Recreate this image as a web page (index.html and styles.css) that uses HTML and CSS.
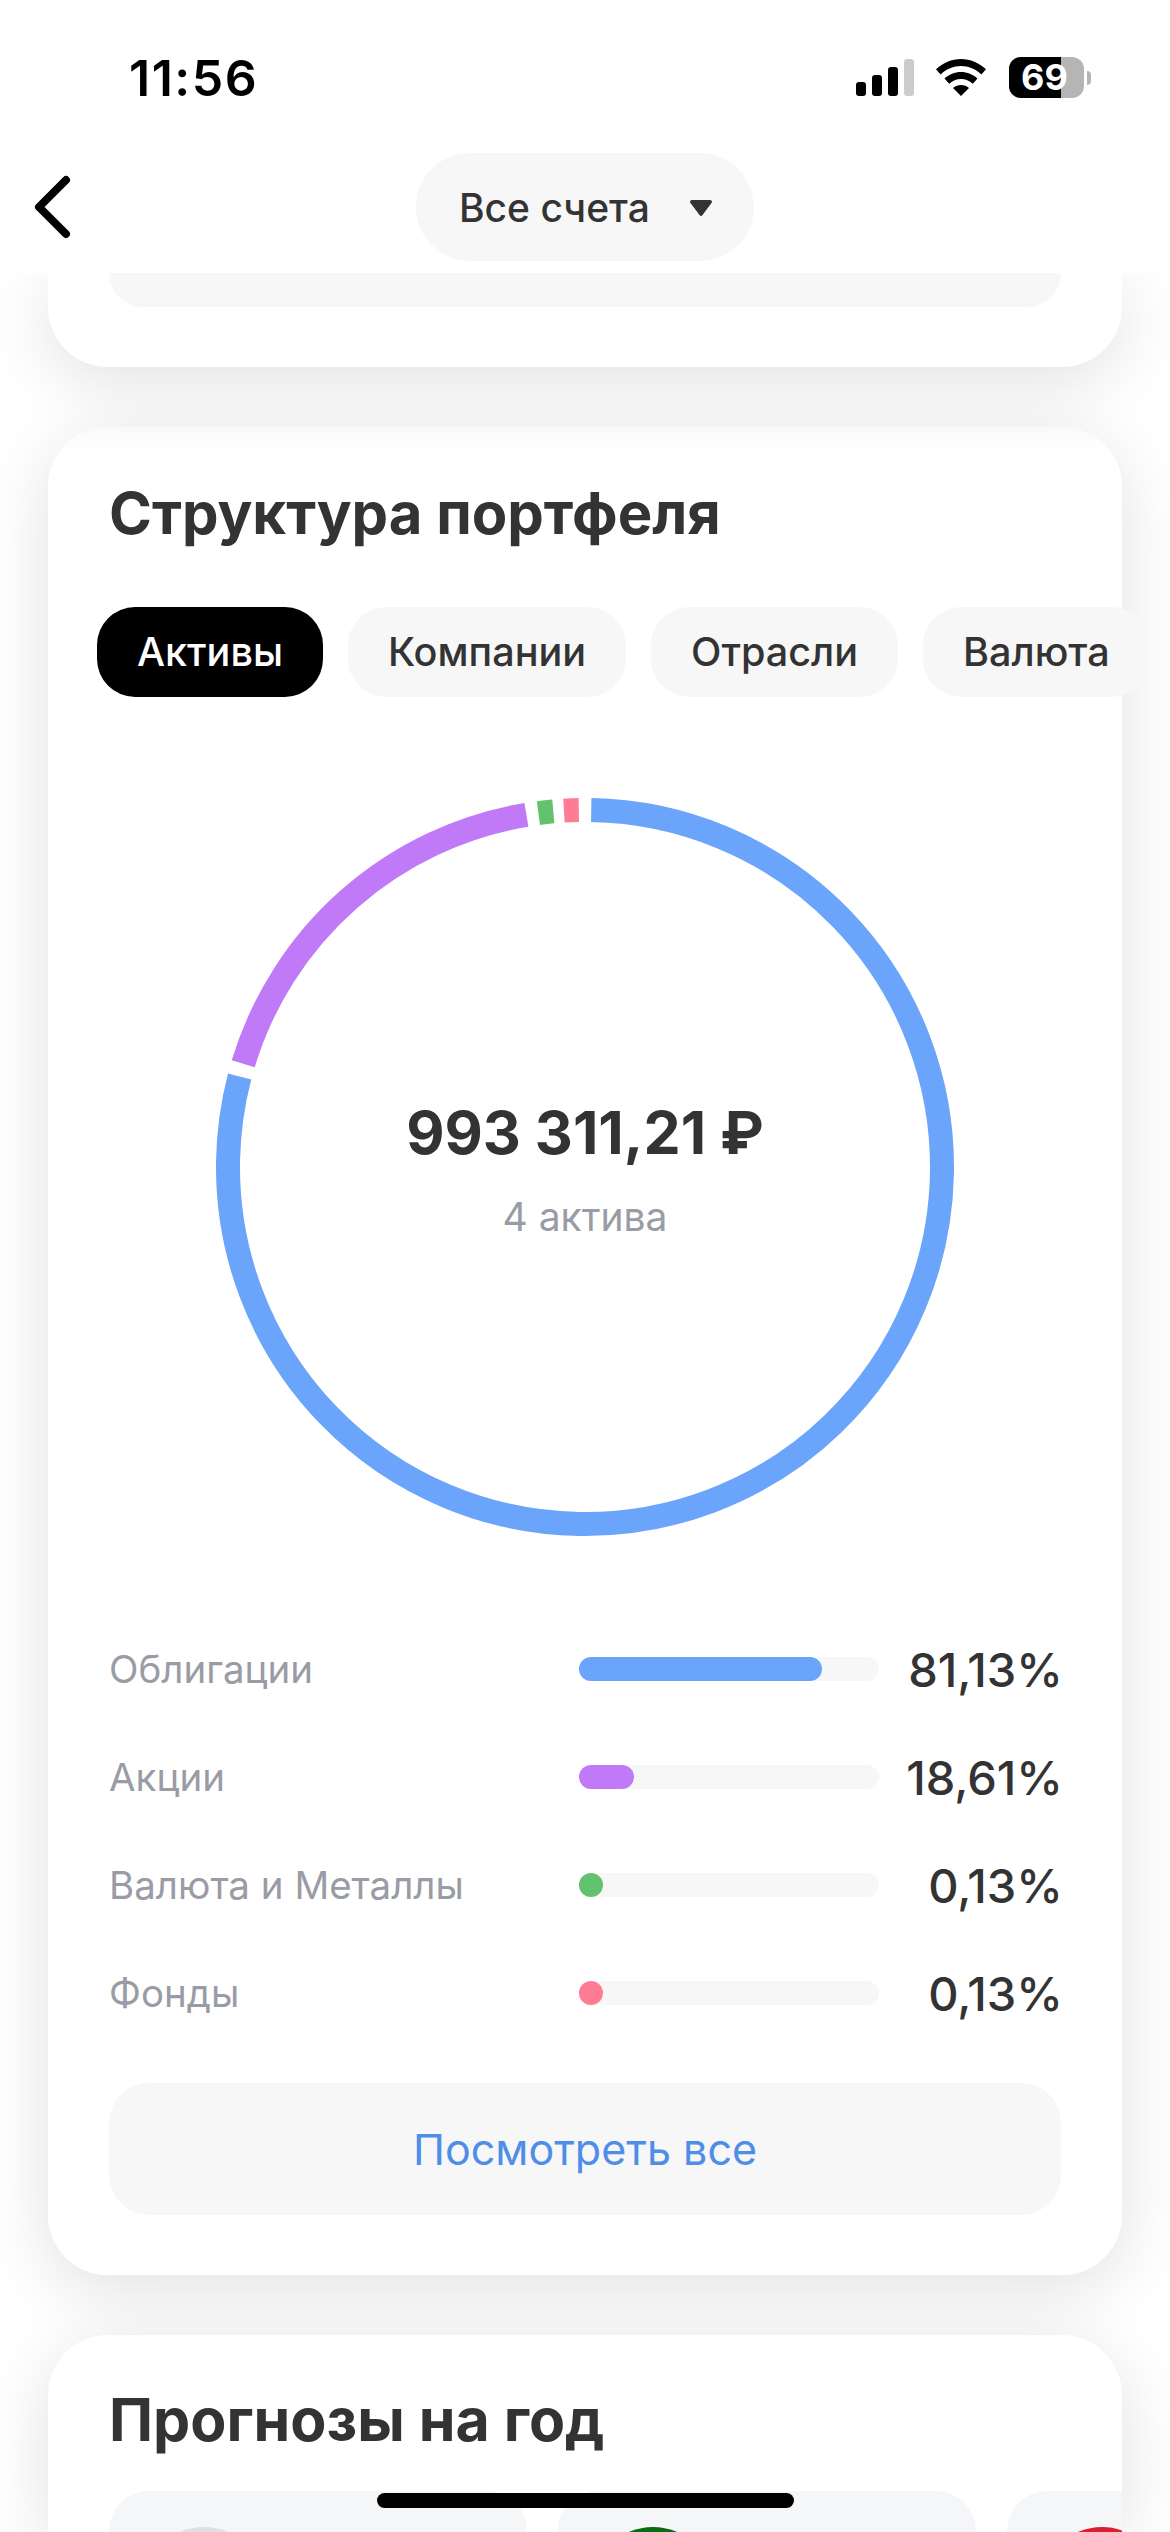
FILE: index.html
```html
<!DOCTYPE html>
<html lang="ru">
<head>
<meta charset="utf-8">
<title>Структура портфеля</title>
<link rel="stylesheet" href="styles.css">
</head>
<body>
<header class="top">
  <div class="status">
    <span class="time">11:56</span>
    <div class="status-icons">
      <div class="signal">
        <i class="s1"></i><i class="s2"></i><i class="s3"></i><i class="s4"></i>
      </div>
      <svg class="wifi" viewBox="0 0 50 37" width="50" height="37">
        <path d="M25 0C15.5 0 7 3.8 0 10.2l4.6 5.2C10.600 10 17.500 7 25 7s14.400 3 20.400 8.400L50 10.200C43 3.800 34.500 0 25 0z"/>
        <path d="M25 13c-6.300 0-12 2.500-16.500 6.500l4.700 5.200C16.500 21.800 20.500 20 25 20s8.500 1.800 11.800 4.700l4.700-5.200C37 15.500 31.300 13 25 13z"/>
        <path d="M25 26c-3 0-5.800 1.100-8 3l8 8 8-8c-2.200-1.900-5-3-8-3z"/>
      </svg>
      <div class="battery"><span class="battery-fill"></span><span class="battery-num">69</span></div>
      <span class="battery-nub"></span>
    </div>
  </div>
  <div class="nav">
    <svg class="back" viewBox="0 0 40 66" width="40" height="66">
      <path d="M33 6L6 33l27 27"/>
    </svg>
    <div class="account">
      <span>Все счета</span>
      <svg class="caret" viewBox="0 0 22 16" width="22" height="16"><path d="M2 0h18c1.700 0 2.500 1.600 1.500 3L12.500 15c-.8 1.200-2.200 1.200-3 0L.5 3C-.5 1.600.3 0 2 0z"/></svg>
    </div>
  </div>
</header>

<main class="feed">
  <section class="card card-cut">
    <div class="cut-block"></div>
  </section>

  <section class="card card-main">
    <h2 class="title">Структура портфеля</h2>
    <div class="tabs">
      <span class="tab tab-on">Активы</span>
      <span class="tab">Компании</span>
      <span class="tab">Отрасли</span>
      <span class="tab">Валюта</span>
    </div>
    <div class="ring-wrap">
      <svg class="ring" viewBox="0 0 740 740" width="740" height="740">
        <g transform="rotate(-90 370 370)">
          <circle class="arc arc-blue" cx="370" cy="370" r="357" pathLength="360" stroke-dasharray="283.7 360" transform="rotate(1 370 370)"/>
          <circle class="arc arc-purple" cx="370" cy="370" r="357" pathLength="360" stroke-dasharray="63.75 360" transform="rotate(286.8 370 370)"/>
          <circle class="arc arc-green" cx="370" cy="370" r="357" pathLength="360" stroke-dasharray="2.43 360" transform="rotate(352.5 370 370)"/>
          <circle class="arc arc-pink" cx="370" cy="370" r="357" pathLength="360" stroke-dasharray="2.41 360" transform="rotate(356.62 370 370)"/>
        </g>
      </svg>
      <div class="ring-center">
        <div class="sum">993 311,21 ₽</div>
        <div class="sum-note">4 актива</div>
      </div>
    </div>
    <ul class="rows">
      <li class="row">
        <span class="row-label">Облигации</span>
        <span class="track"><span class="bar bar-blue" style="width:243px"></span></span>
        <span class="row-val">81,13%</span>
      </li>
      <li class="row">
        <span class="row-label">Акции</span>
        <span class="track"><span class="bar bar-purple" style="width:55px"></span></span>
        <span class="row-val">18,61%</span>
      </li>
      <li class="row">
        <span class="row-label">Валюта и Металлы</span>
        <span class="track"><span class="bar bar-green" style="width:24px"></span></span>
        <span class="row-val">0,13%</span>
      </li>
      <li class="row">
        <span class="row-label">Фонды</span>
        <span class="track"><span class="bar bar-pink" style="width:24px"></span></span>
        <span class="row-val">0,13%</span>
      </li>
    </ul>
    <div class="more">Посмотреть все</div>
  </section>

  <section class="card card-next">
    <h2 class="title title-next">Прогнозы на год</h2>
    <div class="forecasts">
      <div class="forecast"><span class="dot dot-gray"></span></div>
      <div class="forecast"><span class="dot dot-green"></span></div>
      <div class="forecast"><span class="dot dot-red"></span></div>
    </div>
  </section>
</main>
<div class="home"></div>
</body>
</html>
```

FILE: styles.css
```css
* { box-sizing: border-box; }
html, body { margin: 0; padding: 0; height: 2532px; overflow: hidden; background: #fff; }
body { font-family: Inter, "Noto Sans", sans-serif; color: #333; position: relative; }

.top { position: relative; z-index: 5; height: 273px; background: #fff; }
.status { height: 153px; display: flex; justify-content: space-between; padding: 0 86px 0 129px; }
.time { font-size: 50px; font-weight: 600; line-height: 50px; margin-top: 53px; color: #000; letter-spacing: 1.5px; }
.status-icons { display: flex; align-items: flex-start; padding-top: 57px; position: relative; }
.signal { display: flex; align-items: flex-end; gap: 6px; height: 37px; margin-top: 2px; }
.signal i { display: block; width: 10px; border-radius: 3px; background: #000; }
.s1 { height: 14px; }
.s2 { height: 21px; }
.s3 { height: 29px; }
.signal .s4 { height: 37px; background: #ccc; }
.wifi { margin: 2px 23px 0 22px; fill: #000; }
.battery { position: relative; width: 75px; height: 41px; border-radius: 12px; background: #b5b5b5; }
.battery-fill { position: absolute; left: 0; top: 0; bottom: 0; width: 52px; background: #000; border-radius: 12px 0 0 12px; }
.battery-num { position: absolute; left: 12px; top: 0; line-height: 41px; font-size: 36px; font-weight: 700; color: #fff; }
.battery-nub { width: 4px; height: 14px; position: absolute; right: -7px; top: 71px; background: #b5b5b5; border-radius: 0 4px 4px 0; }

.nav { position: relative; height: 108px; display: flex; justify-content: center; }
.back { position: absolute; left: 33px; top: 21px; fill: none; stroke: #000; stroke-width: 8; stroke-linecap: round; stroke-linejoin: round; }
.account { width: 338px; height: 108px; border-radius: 54px; background: #f7f7f7; display: flex; align-items: center; padding-left: 43px; font-size: 39px; font-weight: 500; }
.caret { margin-left: 40px; margin-top: 2px; fill: #333; }

.feed { display: flex; flex-direction: column; gap: 60px; padding: 0 48px; }
.card { background: #fff; border-radius: 60px; padding: 0 61px; box-shadow: 0 14px 70px rgba(0,0,0,.12); }
.card-cut { height: 94px; border-radius: 0 0 60px 60px; }
.cut-block { height: 34px; background: #f7f7f7; border-radius: 0 0 40px 40px; }
.card-main { padding-top: 51px; padding-bottom: 60px; height: 1848px; background: linear-gradient(#f9f9f9, #fff 24px); }
.card-next { padding-top: 50px; height: 197px; border-radius: 60px 60px 0 0; overflow: hidden; }
.title { margin: 0; font-size: 58px; line-height: 70px; font-weight: 700; color: #333; }
.title-next { font-size: 59px; }

.tabs { display: flex; gap: 25px; margin: 59px 0 0 -12px; }
.tab { flex: none; height: 90px; padding: 0 40px; border-radius: 38px; background: #f7f7f7; display: flex; align-items: center; font-size: 39.6px; font-weight: 500; }
.tab-on { background: #000; color: #fff; }

.ring-wrap { position: relative; width: 740px; height: 740px; margin: 100px auto 0; }
.ring { display: block; }
.arc { fill: none; stroke-width: 24; }
.arc-blue { stroke: #6ba4fb; }
.arc-purple { stroke: #c07af7; }
.arc-green { stroke: #62c26e; }
.arc-pink { stroke: #ff7d94; }
.ring-center { position: absolute; inset: 0; display: flex; flex-direction: column; align-items: center; padding-top: 296px; }
.sum { font-size: 59px; line-height: 80px; font-weight: 700; color: #333; }
.sum-note { margin-top: 22px; font-size: 39px; line-height: 44px; color: #9a9ca5; }

.rows { list-style: none; margin: 78px 0 0; padding: 0; }
.row { height: 108px; display: flex; align-items: center; }
.row-label { width: 470px; font-size: 38.5px; color: #9a9ca5; }
.track { width: 300px; height: 24px; border-radius: 12px; background: #f7f7f7; display: block; }
.bar { display: block; height: 24px; border-radius: 12px; }
.bar-blue { background: #6ba4fb; }
.bar-purple { background: #c07af7; }
.bar-green { background: #62c26e; }
.bar-pink { background: #ff7d94; }
.row-val { flex: 1; text-align: right; margin-right: -2px; font-size: 47px; font-weight: 500; color: #333; }

.more { margin-top: 36px; height: 132px; border-radius: 40px; background: #f7f7f8; display: flex; align-items: center; justify-content: center; font-size: 43px; color: #4f8ee8; }

.forecasts { display: flex; gap: 31px; margin-top: 36px; }
.forecast { flex: none; width: 418px; height: 200px; border-radius: 40px; background: #f5f6f8; padding: 36px 0 0 35px; }
.dot { display: block; width: 120px; height: 120px; border-radius: 50%; }
.dot-gray { background: #dfe0e4; }
.dot-green { background: #0a6b12; }
.dot-red { background: #dc1f2e; }

.home { position: absolute; z-index: 6; left: 377px; top: 2493px; width: 417px; height: 15px; border-radius: 8px; background: #000; }
```
